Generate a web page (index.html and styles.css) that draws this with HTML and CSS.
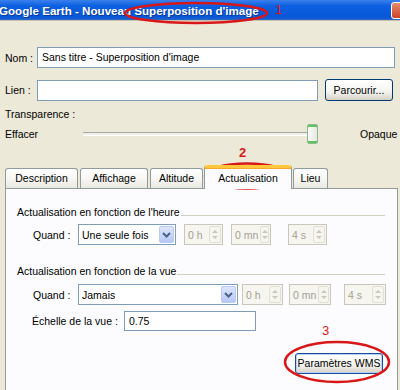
FILE: index.html
```html
<!DOCTYPE html>
<html lang="fr">
<head>
  <meta charset="UTF-8">
  <title>Superposition d'image</title>
  <link rel="stylesheet" href="styles.css">
</head>
<body>
  <div class="window">
    <div class="titlebar">
      <span class="title">Google Earth - Nouveau Superposition d'image</span>
      <span class="close"></span>
    </div>
    <div class="content">
      <div class="row nom-row">
        <span class="lbl nom-lbl">Nom :</span>
        <div class="field nom-field">Sans titre - Superposition d'image</div>
      </div>
      <div class="row lien-row">
        <span class="lbl nom-lbl">Lien :</span>
        <div class="field lien-field"></div>
        <div class="btn browse-btn">Parcourir...</div>
      </div>
      <div class="caption">Transparence :</div>
      <div class="row slider-row">
        <span class="slider-lbl">Effacer</span>
        <div class="slider">
          <div class="track"></div>
          <div class="thumb"></div>
        </div>
        <span class="opaque-lbl">Opaque</span>
      </div>

      <div class="tabs">
        <div class="tab tab-desc">Description</div>
        <div class="tab tab-aff">Affichage</div>
        <div class="tab tab-alt">Altitude</div>
        <div class="tab tab-act active">Actualisation</div>
        <div class="tab tab-lieu">Lieu</div>
      </div>
      <div class="panel">
        <div class="group-title"><span>Actualisation en fonction de l'heure</span><span class="rule"></span></div>
        <div class="row quand-row first">
          <span class="lbl quand-lbl">Quand :</span>
          <div class="combo combo-short"><span class="combo-text">Une seule fois</span><span class="combo-btn"><svg width="9" height="6" viewBox="0 0 9 6"><path d="M1 1 L4.5 4.5 L8 1" fill="none" stroke="#4d6185" stroke-width="2"/></svg></span></div>
          <div class="spin sp1"><span>0 h</span><span class="spin-btn"><i class="up"></i><i class="down"></i></span></div>
          <div class="spin sp2"><span>0 mn</span><span class="spin-btn"><i class="up"></i><i class="down"></i></span></div>
          <div class="spin sp3"><span>4 s</span><span class="spin-btn"><i class="up"></i><i class="down"></i></span></div>
        </div>

        <div class="group-title second"><span>Actualisation en fonction de la vue</span><span class="rule"></span></div>
        <div class="row quand-row">
          <span class="lbl quand-lbl">Quand :</span>
          <div class="combo combo-long"><span class="combo-text">Jamais</span><span class="combo-btn"><svg width="9" height="6" viewBox="0 0 9 6"><path d="M1 1 L4.5 4.5 L8 1" fill="none" stroke="#4d6185" stroke-width="2"/></svg></span></div>
          <div class="spin sp4"><span>0 h</span><span class="spin-btn"><i class="up"></i><i class="down"></i></span></div>
          <div class="spin sp5"><span>0 mn</span><span class="spin-btn"><i class="up"></i><i class="down"></i></span></div>
          <div class="spin sp6"><span>4 s</span><span class="spin-btn"><i class="up"></i><i class="down"></i></span></div>
        </div>
        <div class="row echelle-row">
          <span class="lbl echelle-lbl">Échelle de la vue :</span>
          <div class="field echelle-field">0.75</div>
        </div>
        <div class="btn-row">
          <div class="btn wms-btn">Paramètres WMS</div>
        </div>
      </div>
    </div>

    <!-- annotations drawn on top of the screenshot -->
    <svg class="marks" width="400" height="390" viewBox="0 0 400 390">
      <ellipse cx="196" cy="13" rx="71" ry="10" fill="none" stroke="#d81818" stroke-width="2.5"/>
      <ellipse cx="247" cy="176" rx="42" ry="12.5" fill="none" stroke="#d81818" stroke-width="2.5"/>
      <ellipse cx="337" cy="362" rx="52" ry="20" fill="none" stroke="#d81818" stroke-width="2.5"/>
    </svg>
    <span class="num num1">1</span>
    <span class="num num2">2</span>
    <span class="num num3">3</span>
  </div>
</body>
</html>
```

FILE: styles.css
```css
body {
  margin: 0;
  font-family: 'Liberation Sans', Arial, sans-serif;
  font-size: 10.5px;
  color: #000;
  background: #ece9d8;
}
.window {
  position: relative;
  width: 400px;
  height: 390px;
  overflow: hidden;
  background: #ece9d8;
}
.titlebar {
  height: 20px;
  display: flex;
  align-items: center;
  justify-content: space-between;
  background: linear-gradient(#3a80ec, #0b5fe0 30%, #0757d8 85%, #2b66c4);
  border-bottom: 1px solid #c5c2b2;
}
.title {
  margin-left: -1px;
  color: #fff;
  font-weight: bold;
  font-size: 11.6px;
  white-space: nowrap;
  text-shadow: 1px 1px 0 #0a3a9a;
}
.close {
  width: 14px;
  height: 15px;
  margin-right: -7px;
  border: 1px solid #fff;
  border-radius: 3px;
  background: linear-gradient(#e88a6c, #c9432b);
}
.content {
  padding: 26px 0 0 0;
}
.row {
  display: flex;
  align-items: center;
  white-space: nowrap;
}
.row > * {
  flex-shrink: 0;
}
.nom-lbl {
  width: 32px;
  padding-left: 5px;
}
.field {
  box-sizing: border-box;
  height: 21px;
  background: #fff;
  border: 1px solid #7f9db9;
  padding: 0 4px;
  line-height: 19px;
  white-space: nowrap;
}
.nom-field {
  width: 358px;
}
.lien-row {
  margin-top: 11px;
}
.lien-field {
  width: 281px;
}
.btn {
  box-sizing: border-box;
  height: 22px;
  line-height: 20px;
  text-align: center;
  white-space: nowrap;
  border: 1px solid #003c74;
  border-radius: 3px;
  background: linear-gradient(#ffffff, #f3f3ef 60%, #d6d0c5);
}
.browse-btn {
  width: 68px;
  margin-left: 7px;
}
.caption {
  margin-top: 6px;
  padding-left: 5px;
  line-height: 14px;
}
.slider-row {
  height: 20px;
  margin-top: 3px;
  padding-left: 5px;
}
.slider-lbl {
  width: 78px;
}
.slider {
  position: relative;
  width: 235px;
  height: 20px;
  margin-right: 42px;
}
.track {
  margin-top: 8px;
  height: 2px;
  border-top: 1px solid #a7a6a0;
  border-bottom: 1px solid #fff;
  background: #f0efe9;
  border-radius: 1px;
}
.thumb {
  position: absolute;
  left: 224px;
  top: 0;
  box-sizing: border-box;
  width: 11px;
  height: 20px;
  border: 1px solid #8fb88f;
  border-radius: 2px;
  background: linear-gradient(90deg, #fbfbf9, #e8e7e1);
  box-shadow: inset 0 2px 0 #5fc35f, inset 0 -2px 0 #5fc35f;
}
.tabs {
  display: flex;
  align-items: flex-end;
  gap: 2px;
  height: 23px;
  margin-top: 21px;
  padding-left: 5px;
  position: relative;
  z-index: 1;
}
.tab {
  box-sizing: border-box;
  height: 20px;
  line-height: 18px;
  text-align: center;
  border: 1px solid #919b9c;
  border-bottom: none;
  border-radius: 3px 3px 0 0;
  background: linear-gradient(#ffffff, #f7f7f4 50%, #e9e8e1);
}
.tab-desc { width: 73px; }
.tab-aff { width: 68px; }
.tab-alt { width: 53px; }
.tab-act { width: 88px; }
.tab-lieu { width: 35px; }
.tab.active {
  height: 24px;
  margin: 0 -1px -1px -1px;
  line-height: 20px;
  background: #fcfcfe;
  border-top: 3px solid #ffc83c;
  box-shadow: inset 0 1px 0 #f5a832;
}
.panel {
  box-sizing: border-box;
  margin-left: 5px;
  width: 393px;
  height: 210px;
  background: #fcfcfe;
  border: 1px solid #919b9c;
  padding: 16px 12px 0 11px;
}
.group-title {
  display: flex;
  align-items: center;
  line-height: 14px;
  white-space: nowrap;
}
.group-title .rule {
  flex: 1;
  height: 0;
  margin-top: 6px;
  margin-left: 1px;
  border-top: 1px solid #d0d0bf;
}
.group-title.second {
  margin-top: 19px;
}
.quand-row {
  margin-top: 6px;
  height: 21px;
}
.quand-row.first {
  margin-top: 5px;
}
.quand-lbl {
  width: 45px;
  padding-left: 16px;
}
.combo {
  box-sizing: border-box;
  height: 21px;
  display: flex;
  align-items: center;
  justify-content: space-between;
  background: #fff;
  border: 1px solid #7f9db9;
  padding: 0 1px 0 3px;
}
.combo-short { width: 98px; }
.combo-long { width: 160px; }
.combo-btn {
  width: 15px;
  height: 17px;
  display: flex;
  align-items: center;
  justify-content: center;
  border-radius: 2px;
  background: linear-gradient(#dde6fc, #b5c8f7);
  border: 1px solid #b9cbf3;
  box-sizing: border-box;
}
.spin {
  box-sizing: border-box;
  height: 21px;
  display: flex;
  align-items: center;
  justify-content: space-between;
  gap: 2px;
  border: 1px solid #c9c7ba;
  background: #f6f5f0;
  color: #a3a092;
  padding: 0 1px 0 3px;
}
.spin-btn {
  width: 12px;
  height: 17px;
  display: flex;
  flex-direction: column;
  align-items: center;
  justify-content: center;
  gap: 3px;
  border: 1px solid #e2e0d6;
  box-sizing: border-box;
  border-radius: 2px;
}
.spin-btn i {
  width: 0;
  height: 0;
  border-left: 3px solid transparent;
  border-right: 3px solid transparent;
}
.spin-btn .up { border-bottom: 3px solid #cbc8bc; }
.spin-btn .down { border-top: 3px solid #cbc8bc; }
.sp1 { width: 39px; margin-left: 8px; }
.sp2 { width: 40px; margin-left: 8px; }
.sp3 { width: 39px; margin-left: 17px; }
.sp4 { width: 41px; margin-left: 4px; }
.sp5 { width: 42px; margin-left: 6px; }
.sp6 { width: 42px; margin-left: 13px; }
.echelle-row {
  margin-top: 6px;
}
.echelle-lbl {
  width: 92px;
  padding-left: 15px;
}
.echelle-field {
  width: 132px;
  height: 20px;
  line-height: 18px;
}
.btn-row {
  display: flex;
  justify-content: flex-end;
  margin-top: 22px;
  padding-right: 2px;
}
.wms-btn {
  width: 88px;
  height: 21px;
  line-height: 19px;
  border-color: #1b4e9a;
  box-shadow: inset 0 0 0 1px #b7d1f6;
}
.marks {
  position: absolute;
  left: 0;
  top: 0;
  pointer-events: none;
}
.num {
  position: absolute;
  color: #d81818;
  font-weight: bold;
  font-size: 13px;
  line-height: 13px;
}
.num1 { left: 275px; top: 3px; font-weight: normal; }
.num2 { left: 239px; top: 146px; }
.num3 { left: 322px; top: 324px; font-weight: normal; }
```
